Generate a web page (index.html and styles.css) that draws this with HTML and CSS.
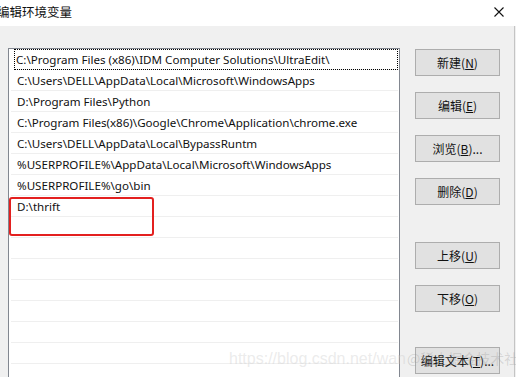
FILE: index.html
```html
<!DOCTYPE html>
<html lang="zh">
<head>
<meta charset="utf-8">
<link rel="stylesheet" href="styles.css">
</head>
<body>
<div class="dialog">
  <div class="titlebar">
    <span class="title">编辑环境变量</span>
    <svg class="close" width="12" height="12" viewBox="0 0 12 12"><path d="M1.5 1.5 L10.5 10.5 M10.5 1.5 L1.5 10.5" stroke="#111" stroke-width="1.1" fill="none"/></svg>
  </div>
  <div class="content">
    <div class="listbox">
      <div class="row focused">C:\Program Files (x86)\IDM Computer Solutions\UltraEdit\</div>
      <div class="row">C:\Users\DELL\AppData\Local\Microsoft\WindowsApps</div>
      <div class="row">D:\Program Files\Python</div>
      <div class="row">C:\Program Files(x86)\Google\Chrome\Application\chrome.exe</div>
      <div class="row">C:\Users\DELL\AppData\Local\BypassRuntm</div>
      <div class="row">%USERPROFILE%\AppData\Local\Microsoft\WindowsApps</div>
      <div class="row">%USERPROFILE%\go\bin</div>
      <div class="row">D:\thrift</div>
      <div class="row"></div>
      <div class="row"></div>
      <div class="row"></div>
      <div class="row"></div>
      <div class="row"></div>
      <div class="row"></div>
      <div class="row"></div>
      <div class="row"></div>
      <div class="highlight"></div>
    </div>
    <div class="buttons">
      <div class="btn">新建(<u>N</u>)</div>
      <div class="btn">编辑(<u>E</u>)</div>
      <div class="btn">浏览(<u>B</u>)...</div>
      <div class="btn">删除(<u>D</u>)</div>
      <div class="btn group2">上移(<u>U</u>)</div>
      <div class="btn">下移(<u>O</u>)</div>
      <div class="btn group3">编辑文本(<u>T</u>)...</div>
    </div>
  </div>
  <div class="watermark">https://blog.csdn.net/wan<span class="wm2">@稀土掘金技术社区</span></div>
</div>
</body>
</html>
```

FILE: styles.css
```css
html, body {
  margin: 0;
  padding: 0;
  background: #f0f0f0;
  overflow: hidden;
}
body {
  width: 516px;
  height: 377px;
  font-family: "Noto Sans", "Noto Sans CJK SC", sans-serif;
  font-size: 12px;
  color: #000;
}
.dialog {
  position: relative;
  width: 516px;
  height: 377px;
  overflow: hidden;
}
.titlebar {
  height: 26px;
  background: #fff;
  display: flex;
  align-items: center;
  justify-content: space-between;
}
.title {
  font-family: "Noto Sans CJK SC", sans-serif;
  font-size: 12.5px;
  margin-left: -3px;
  margin-top: -3px;
  color: #111;
}
.close {
  margin-right: 11px;
  margin-top: -3px;
}
.content {
  display: flex;
  align-items: flex-start;
  padding: 22px 0 0 8px;
  height: 400px;
  margin-right: 1px;
  border-right: 1px solid #c4c4c4;
}
.listbox {
  position: relative;
  width: 390px;
  height: 360px;
  border: 1px solid #828790;
  background: #fff;
  box-sizing: content-box;
  flex: none;
}
.row {
  height: 19px;
  padding-top: 1px;
  line-height: 20px;
  margin: 0 1px 0 2px;
  padding-left: 6px;
  border-bottom: 1px solid #efefef;
  white-space: nowrap;
  overflow: hidden;
  font-size: 11.6px;
  color: #111;
}
.row.focused {
  margin-left: 5px;
  padding-left: 2px;
  outline: 1px dotted #000;
  outline-offset: -1px;
}
.highlight {
  position: absolute;
  left: 0;
  top: 148px;
  width: 141px;
  height: 35px;
  border: 2px solid #e3201f;
  border-radius: 3px;
}
.buttons {
  display: flex;
  flex-direction: column;
  gap: 16px;
  margin-left: 15px;
  margin-top: 1px;
}
.btn {
  width: 83px;
  height: 24px;
  padding-bottom: 1px;
  box-sizing: content-box;
  border: 1px solid #adadad;
  background: #e1e1e1;
  display: flex;
  align-items: center;
  justify-content: center;
  font-family: "Noto Sans CJK SC", sans-serif;
  font-size: 12px;
  color: #111;
}
.btn u {
  text-decoration-thickness: 1px;
  text-underline-offset: 1px;
}
.btn.group2 {
  margin-top: 21px;
}
.btn.group3 {
  margin-top: 19px;
}
.watermark {
  position: absolute;
  left: 229px;
  top: 348px;
  font-family: "Liberation Sans", sans-serif;
  font-size: 16px;
  color: rgba(205, 205, 205, 0.4);
  white-space: nowrap;
  pointer-events: none;
}
.wm2 {
  font-family: "Noto Sans CJK SC", sans-serif;
  font-size: 14px;
  color: rgba(150, 150, 150, 0.3);
  margin-left: 1px;
}
```
